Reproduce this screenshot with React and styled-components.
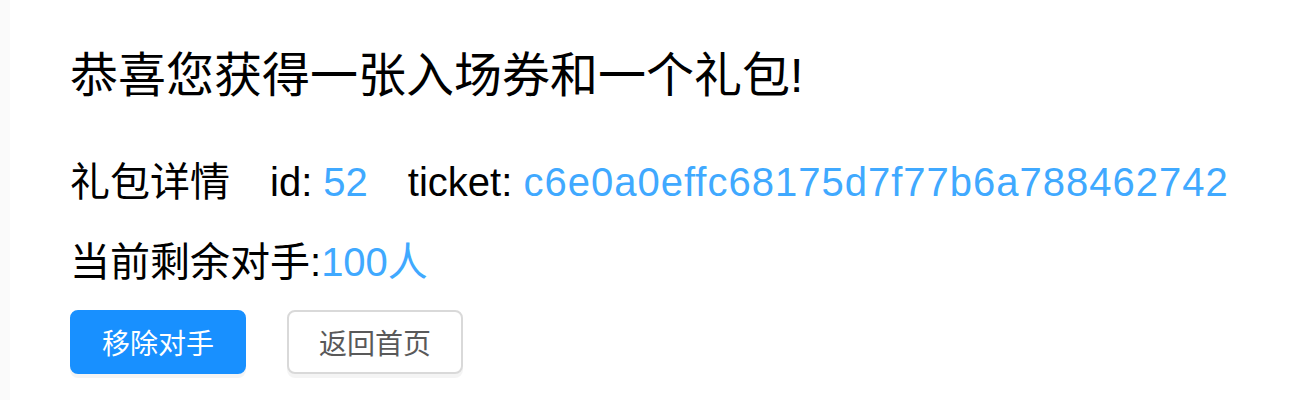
import React from 'react';
import styled, { createGlobalStyle } from 'styled-components';

const GlobalStyle = createGlobalStyle`
  body {
    margin: 0;
    background: #fff;
    font-family: "Liberation Sans", "Noto Sans CJK SC", sans-serif;
  }
`;

const Page = styled.div`
  display: flex;
  min-height: 400px;
`;

const Edge = styled.div`
  width: 10px;
  background: #fafafa;
`;

const Content = styled.div`
  flex: 1;
  padding: 40px 0 0 60px;
`;

const Title = styled.h1`
  margin: 0 0 40px;
  font-size: 48px;
  line-height: 72px;
  font-weight: 400;
  color: #000;
`;

const Line = styled.div`
  font-size: 40px;
  line-height: 60px;
  color: #000;
  margin-top: ${p => p.mt || 0}px;
`;

const Label = styled.span`
  margin-right: 40px;
`;

const Value = styled.span`
  color: #40a9ff;
  letter-spacing: ${p => p.spread || 0}px;
`;

const Actions = styled.div`
  display: flex;
  gap: 41px;
  margin-top: 18px;
`;

const Button = styled.button`
  height: 64px;
  padding: 0 30px;
  border-radius: 8px;
  border: 2px solid ${p => (p.primary ? '#1890ff' : '#d9d9d9')};
  background: ${p => (p.primary ? '#1890ff' : '#fff')};
  color: ${p => (p.primary ? '#fff' : '#595959')};
  font-family: "Noto Sans CJK SC", sans-serif;
  font-size: 28px;
  box-shadow: 0 4px 0 rgba(0, 0, 0, 0.045);
  cursor: pointer;
`;

export default function App() {
  return (
    <Page>
      <GlobalStyle />
      <Edge />
      <Content>
        <Title>恭喜您获得一张入场券和一个礼包!</Title>
        <Line>
          <Label>礼包详情</Label>
          <Label>id: <Value>52</Value></Label>
          ticket: <Value spread={1}>c6e0a0effc68175d7f77b6a788462742</Value>
        </Line>
        <Line mt={20}>
          当前剩余对手:<Value>100人</Value>
        </Line>
        <Actions>
          <Button primary>移除对手</Button>
          <Button>返回首页</Button>
        </Actions>
      </Content>
    </Page>
  );
}
